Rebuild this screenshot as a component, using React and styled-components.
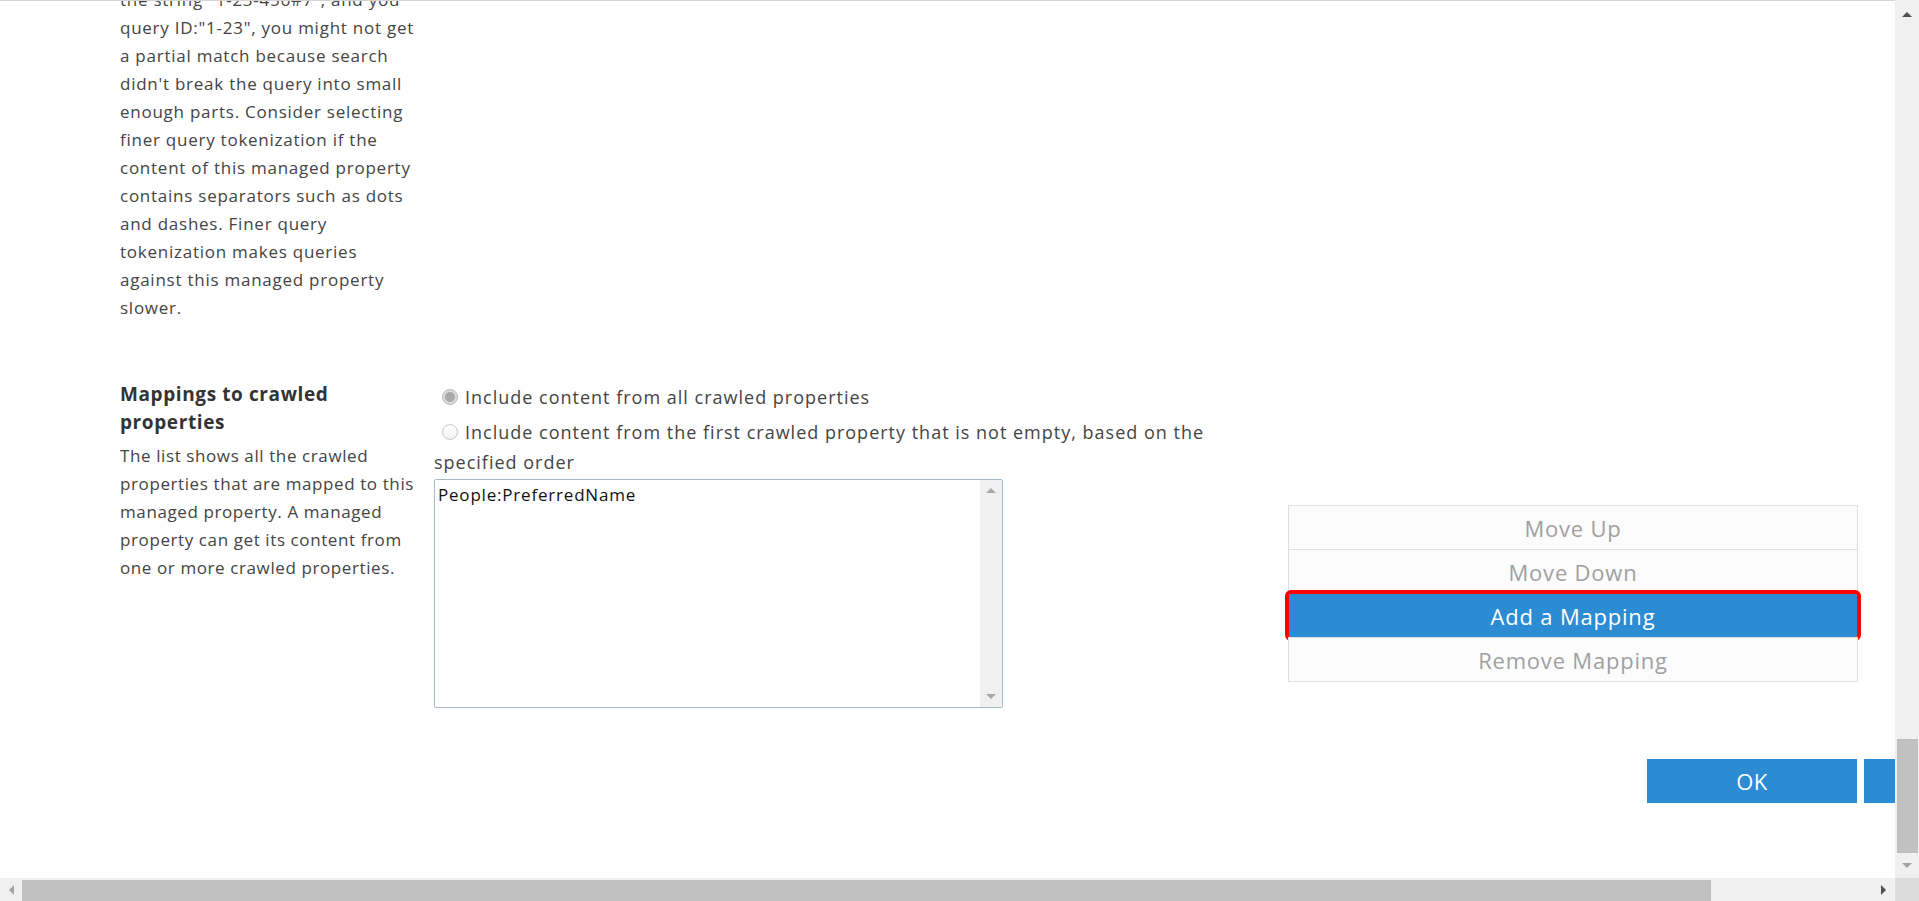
import React from 'react';
import styled, { createGlobalStyle } from 'styled-components';

const GlobalStyle = createGlobalStyle`
  html, body {
    margin: 0;
    padding: 0;
    background: #ffffff;
    overflow: hidden;
  }
  body {
    font-family: "Open Sans", "Noto Sans", "Liberation Sans", sans-serif;
    color: #444444;
  }
`;

const Frame = styled.div`
  display: grid;
  grid-template-columns: 1fr 24px;
  grid-template-rows: 1fr 23px;
  width: 100vw;
  height: 100vh;
`;

const Viewport = styled.div`
  overflow: hidden;
  border-top: 1px solid #d4d4d4;
  box-sizing: border-box;
`;

/* scrolled content: the page is scrolled down, first line cut */
const Content = styled.div`
  margin-top: -15px;
  padding-left: 120px;
  width: 2100px;
`;

const Para = styled.div`
  font-size: 17px;
  letter-spacing: ${(p) => p.$ls || 0.75}px;
  line-height: 28px;
  white-space: nowrap;
  color: #444444;
`;

const Section = styled.div`
  display: flex;
  margin-top: 58px;
`;

const Aside = styled.div`
  width: 314px;
  flex-shrink: 0;
`;

const Heading = styled.div`
  font-size: 19px;
  letter-spacing: 0.6px;
  font-weight: 700;
  line-height: 28px;
  color: #333333;
  white-space: nowrap;
  margin-bottom: 6px;
`;

const Body = styled.div`
  width: 1424px;
  display: flex;
  flex-direction: column;
  padding-top: 3px;
`;

const Option = styled.div`
  font-size: 18px;
  letter-spacing: 1px;
  line-height: ${(p) => p.$lh || 28}px;
  margin-top: ${(p) => p.$mt || 0}px;
  white-space: nowrap;
  color: #444444;
`;

const Radio = styled.span`
  display: inline-block;
  box-sizing: border-box;
  width: 16px;
  height: 16px;
  margin: 0 7px 0 8px;
  border-radius: 50%;
  vertical-align: -1px;
  border: 1px solid ${(p) => (p.$checked ? '#b9b9b9' : '#c9c9c9')};
  background: ${(p) =>
    p.$checked
      ? 'radial-gradient(circle, #a9a9a9 0 4.5px, #dcdcdc 5.5px 100%)'
      : 'linear-gradient(#ffffff, #f2f2f2)'};
`;

const ListRow = styled.div`
  display: flex;
  justify-content: space-between;
  align-items: center;
  margin-top: 2px;
`;

const ListBox = styled.div`
  width: 569px;
  height: 229px;
  box-sizing: border-box;
  border: 1px solid #a9b7c6;
  border-radius: 2px;
  display: flex;
  background: #ffffff;
`;

const ListItems = styled.div`
  flex: 1;
  padding: 2px 3px;
  font-size: 17px;
  letter-spacing: 0.8px;
  line-height: 26px;
  color: #111111;
`;

const ListScroll = styled.div`
  width: 22px;
  background: #f0f0f0;
  display: flex;
  flex-direction: column;
  justify-content: space-between;
  align-items: center;
  padding: 8px 0;
`;

const ButtonStack = styled.div`
  width: 570px;
  display: flex;
  flex-direction: column;
`;

const StackButton = styled.button`
  height: 45px;
  box-sizing: border-box;
  border: 1px solid #dedede;
  margin-top: -1px;
  background: ${(p) => (p.$active ? '#2b8cd4' : '#fcfcfc')};
  color: ${(p) => (p.$active ? '#ffffff' : '#a0a0a0')};
  font-family: inherit;
  font-size: 22px;
  letter-spacing: 0.8px;
  padding: 0;
  cursor: pointer;
  outline: ${(p) => (p.$active ? '4px solid #ff0000' : 'none')};
  outline-offset: -1px;
  border-radius: ${(p) => (p.$active ? '3px' : '0')};
  position: relative;
  &:first-child {
    margin-top: 0;
  }
`;

const Footer = styled.div`
  display: flex;
  gap: 7px;
  margin-top: 51px;
  padding-left: 1527px;
`;

const PrimaryButton = styled.button`
  width: 210px;
  height: 44px;
  border: none;
  background: #2b8cd4;
  color: #ffffff;
  font-family: inherit;
  font-size: 22px;
  letter-spacing: 0.5px;
  padding: 0;
  flex-shrink: 0;
`;

const VScroll = styled.div`
  background: #f0f0f0;
  display: flex;
  flex-direction: column;
  align-items: center;
`;

const ArrowBox = styled.div`
  width: ${(p) => p.$w || 24}px;
  height: ${(p) => p.$h || 24}px;
  display: flex;
  align-items: center;
  justify-content: center;
  flex-shrink: 0;
`;

const Spacer = styled.div`
  flex: 1;
`;

const VThumb = styled.div`
  width: 21px;
  height: 114px;
  margin-left: 1px;
  background: #c1c1c1;
`;

const HScroll = styled.div`
  background: #f0f0f0;
  display: flex;
  align-items: flex-end;
`;

const HThumb = styled.div`
  width: 1689px;
  height: 21px;
  background: #c1c1c1;
`;

const Corner = styled.div`
  background: #dcdcdc;
`;

const Tri = ({ dir, color, size = 7 }) => {
  const pts = {
    up: `0,${size} ${size},0 ${size * 2},${size}`,
    down: `0,0 ${size * 2},0 ${size},${size}`,
    left: `${size},0 ${size},${size * 2} 0,${size}`,
    right: `0,0 0,${size * 2} ${size},${size}`,
  }[dir];
  const horiz = dir === 'left' || dir === 'right';
  return (
    <svg
      width={horiz ? size : size * 2}
      height={horiz ? size * 2 : size}
      viewBox={`0 0 ${horiz ? size : size * 2} ${horiz ? size * 2 : size}`}
    >
      <polygon points={pts} fill={color} />
    </svg>
  );
};

const topText = [
  'the string "1-23-456#7", and you',
  'query ID:"1-23", you might not get',
  'a partial match because search',
  "didn't break the query into small",
  'enough parts. Consider selecting',
  'finer query tokenization if the',
  'content of this managed property',
  'contains separators such as dots',
  'and dashes. Finer query',
  'tokenization makes queries',
  'against this managed property',
  'slower.',
];

const descText = [
  'The list shows all the crawled',
  'properties that are mapped to this',
  'managed property. A managed',
  'property can get its content from',
  'one or more crawled properties.',
];

const Lines = ({ lines }) =>
  lines.map((l, i) => (
    <React.Fragment key={i}>
      {l}
      {i < lines.length - 1 && <br />}
    </React.Fragment>
  ));

const App = () => {
  return (
    <>
      <GlobalStyle />
      <Frame>
        <Viewport>
          <Content>
            <Para>
              <Lines lines={topText} />
            </Para>

            <Section>
              <Aside>
                <Heading>
                  Mappings to crawled
                  <br />
                  properties
                </Heading>
                <Para $ls={0.6}>
                  <Lines lines={descText} />
                </Para>
              </Aside>

              <Body>
                <Option>
                  <Radio $checked />
                  Include content from all crawled properties
                </Option>
                <Option $mt={6} $lh={30}>
                  <Radio />
                  Include content from the first crawled property that is not empty, based on the
                  <br />
                  specified order
                </Option>

                <ListRow>
                  <ListBox>
                    <ListItems>People:PreferredName</ListItems>
                    <ListScroll>
                      <Tri dir="up" color="#a8a8a8" size={5} />
                      <Tri dir="down" color="#a8a8a8" size={5} />
                    </ListScroll>
                  </ListBox>

                  <ButtonStack>
                    <StackButton>Move Up</StackButton>
                    <StackButton>Move Down</StackButton>
                    <StackButton $active>Add a Mapping</StackButton>
                    <StackButton>Remove Mapping</StackButton>
                  </ButtonStack>
                </ListRow>
              </Body>
            </Section>

            <Footer>
              <PrimaryButton>OK</PrimaryButton>
              <PrimaryButton>Cancel</PrimaryButton>
            </Footer>
          </Content>
        </Viewport>

        <VScroll>
          <ArrowBox $h={28}>
            <Tri dir="up" color="#505050" size={5} />
          </ArrowBox>
          <Spacer />
          <VThumb />
          <ArrowBox $h={25}>
            <Tri dir="down" color="#a3a3a3" size={5} />
          </ArrowBox>
        </VScroll>

        <HScroll>
          <ArrowBox $w={22} $h={23}>
            <Tri dir="left" color="#a3a3a3" size={5} />
          </ArrowBox>
          <HThumb />
          <Spacer />
          <ArrowBox $w={24} $h={23}>
            <Tri dir="right" color="#505050" size={5} />
          </ArrowBox>
        </HScroll>

        <Corner />
      </Frame>
    </>
  );
};

export default App;
